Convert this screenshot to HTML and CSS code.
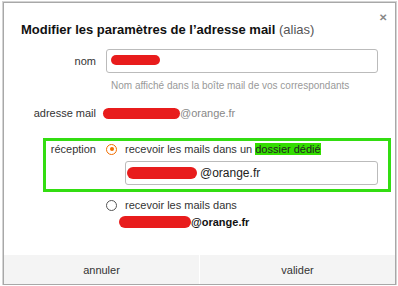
FILE: index.html
```html
<!DOCTYPE html>
<html lang="fr">
<head>
    <meta charset="UTF-8">
    <title>Modifier les paramètres de l'adresse mail</title>
    <link rel="stylesheet" href="styles.css">
</head>
<body>
    <div class="dialog">
        <span class="close">&#x2715;</span>
        <h1 class="title">Modifier les paramètres de l’adresse mail <span class="alias">(alias)</span></h1>

        <div class="form">
            <div class="row row-nom">
                <label class="label">nom</label>
                <div class="field">
                    <div class="input"><span class="blob blob-nom"></span></div>
                    <div class="hint">Nom affiché dans la boîte mail de vos correspondants</div>
                </div>
            </div>

            <div class="row row-adresse">
                <span class="label">adresse mail</span>
                <div class="field value"><span class="blob blob-adresse"></span>@orange.fr</div>
            </div>

            <div class="reception">
                <span class="label">réception</span>
                <div class="field">
                    <div class="option">
                        <span class="radio checked"></span>
                        <span>recevoir les mails dans un <mark class="hl">dossier dédié</mark></span>
                    </div>
                    <div class="input input-folder"><span class="blob blob-folder"></span>@orange.fr</div>
                </div>
            </div>

            <div class="row row-option2">
                <span class="label"></span>
                <div class="field">
                    <div class="option option2">
                        <span class="radio"></span>
                        <span>recevoir les mails dans<br><span class="blob blob-inbox"></span><b>@orange.fr</b></span>
                    </div>
                </div>
            </div>
        </div>

        <div class="footer">
            <button class="btn">annuler</button>
            <button class="btn">valider</button>
        </div>
    </div>
</body>
</html>
```

FILE: styles.css
```css
body {
    margin: 0;
    background: #fff;
    font-family: "Liberation Sans", Arial, sans-serif;
    font-size: 11px;
    color: #333;
}
.dialog {
    position: relative;
    box-sizing: border-box;
    width: 393px;
    height: 283px;
    margin: 2px 0 0 3px;
    border: 1px solid #a8a8a8;
    box-shadow: 0 0 0 1px #d4d4d4;
    background: #fff;
    display: flex;
    flex-direction: column;
}
.close {
    position: absolute;
    top: 9px;
    right: 8px;
    font-size: 10px;
    font-weight: bold;
    color: #888;
}
.title {
    margin: 19px 0 0 17px;
    font-size: 13px;
    line-height: 16px;
    font-weight: bold;
    color: #111;
}
.alias {
    font-weight: normal;
    color: #555;
}
.form {
    margin: 0 17px 0 17px;
}
.row, .reception {
    display: grid;
    grid-template-columns: 75px 1fr;
    column-gap: 10px;
}
.label {
    text-align: right;
    line-height: 14px;
}
.row-nom {
    margin-top: 11px;
}
.row-nom .label {
    line-height: 24px;
}
.input {
    box-sizing: border-box;
    height: 24px;
    border: 1px solid #bbb;
    border-radius: 3px;
    padding: 0 4px;
    display: flex;
    align-items: center;
    color: #222;
    font-size: 12px;
}
.hint {
    margin-top: 7px;
    padding-left: 5px;
    font-size: 10px;
    line-height: 12px;
    color: #999;
}
.row-adresse {
    margin-top: 14px;
    line-height: 14px;
}
.row-adresse .label {
    margin-left: -4px;
}
.value {
    color: #888;
    display: flex;
    align-items: center;
    margin-left: -3px;
}
.blob {
    display: inline-block;
    background: #e81c1c;
    border-radius: 6px;
}
.blob-nom {
    width: 49px;
    height: 10px;
    margin-top: -2px;
}
.blob-adresse {
    width: 77px;
    height: 11px;
}
.reception {
    grid-template-columns: 50px 1fr;
    margin: 18px -13px 0 22px;
    padding: 0 10px 4px 0;
    border: 3px solid #33dd11;
}
.reception .label {
    line-height: 16px;
}
.option {
    display: flex;
    align-items: center;
    gap: 8px;
    line-height: 16px;
}
.radio {
    box-sizing: border-box;
    flex: none;
    width: 11px;
    height: 11px;
    border-radius: 50%;
    border: 1px solid #555;
    position: relative;
}
.radio.checked {
    border-color: #f16e00;
}
.radio.checked::after {
    content: "";
    position: absolute;
    top: 2.5px;
    left: 2.5px;
    width: 4px;
    height: 4px;
    border-radius: 50%;
    background: #f16e00;
}
.hl {
    background: #33dd00;
    color: #222;
}
.input-folder {
    margin: 4px 0 0 19px;
    padding: 0 0 0 1px;
}
.blob-folder {
    width: 70px;
    height: 12px;
    margin-right: 3px;
}
.row-option2 {
    margin-top: 5px;
}
.option2 {
    align-items: flex-start;
    line-height: 17px;
}
.option2 .radio {
    margin-top: 3px;
}
.blob-inbox {
    width: 72px;
    height: 12px;
    margin-left: -6px;
    vertical-align: -2px;
}
.option2 b {
    color: #111;
}
.footer {
    margin-top: auto;
    height: 29px;
    display: flex;
    background: #f4f4f4;
}
.btn {
    flex: 1;
    border: none;
    background: none;
    font-family: inherit;
    font-size: 11px;
    color: #333;
    cursor: pointer;
}
.btn + .btn {
    border-left: 1px solid #fff;
}
```
